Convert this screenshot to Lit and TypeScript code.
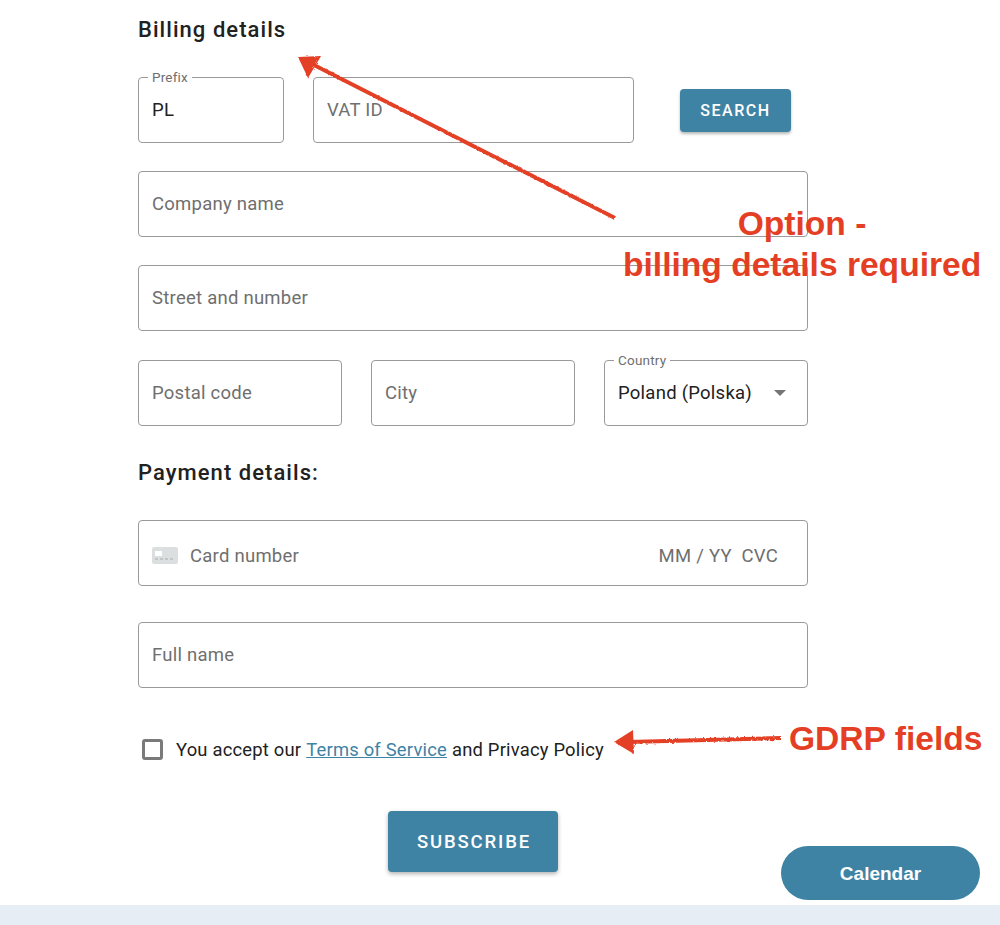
import { LitElement, html, css } from "lit";
import { customElement } from "lit/decorators.js";

@customElement("app-root")
export class AppRoot extends LitElement {
  static styles = css`
    :host { display: block; position: relative; width: 1000px; height: 925px; overflow: hidden; background: #fff; font-family: Roboto, "Liberation Sans", sans-serif; color: #212121; }
    .page { display: flex; flex-direction: column; height: 925px; }
    .form { flex: 1; display: flex; flex-direction: column; width: 670px; margin-left: 138px; }
    h2 { margin: 0; font-size: 22px; line-height: 28px; font-weight: 500; letter-spacing: 1.05px; color: #212121; }
    .title1 { margin-top: 16px; }
    .title2 { margin-top: 33px; }
    .row { display: flex; margin-top: 28px; gap: 29px; }
    .row.first { margin-top: 33px; align-items: center; }
    .row.r4 { margin-top: 29px; }
    .row.card { margin-top: 33px; }
    .row.card .field { padding-top: 5px; }
    .row.name { margin-top: 36px; }
    .field { position: relative; box-sizing: border-box; height: 66px; flex: 1 1 0; min-width: 0; border: 1px solid #9a9a9a; border-radius: 4px; display: flex; align-items: center; padding: 0 13px; font-size: 18.5px; letter-spacing: 0.25px; color: #212121; }
    .ph { color: #6f6f6f; }
    .legend { position: absolute; top: -9px; left: 9px; padding: 0 4px; background: #fff; font-size: 13.5px; line-height: 16px; letter-spacing: 0.2px; color: #6f6f6f; }
    .prefix { flex: 0 0 146px; }
    .vat { flex: 0 0 321px; }
    .search { box-sizing: border-box; flex: 0 0 111px; height: 43px; margin-left: 17px; border: 0; border-radius: 4px; background: #3f83a4; color: #fff; font: 500 16px Roboto, sans-serif; letter-spacing: 1.55px; box-shadow: 0 2px 3px rgba(0,0,0,.28); padding: 0; }
    .caret { margin-left: auto; margin-right: 8px; width: 0; height: 0; border-left: 6px solid transparent; border-right: 6px solid transparent; border-top: 6px solid #757575; }
    .cardicon { width: 26px; height: 17px; margin-right: 12px; flex: none; }
    .right { margin-left: auto; margin-right: 16px; letter-spacing: 0.25px; color: #6f6f6f; white-space: pre; }
    .consent { display: flex; align-items: center; margin-top: 50px; margin-left: 4px; height: 22px; font-size: 18.4px; letter-spacing: 0.2px; color: #212121; }
    .box { box-sizing: border-box; width: 21px; height: 21px; border: 3px solid #7a7a7a; border-radius: 3px; margin-right: 13px; flex: none; }
    a { color: #3f83a4; text-decoration: underline; margin: 0 5px; }
    .submit { box-sizing: border-box; align-self: flex-start; margin-left: 250px; margin-top: 51px; width: 170px; height: 61px; border: 0; border-radius: 4px; background: #3f83a4; color: #fff; font: 500 18.5px Roboto, sans-serif; letter-spacing: 1.85px; box-shadow: 0 2px 4px rgba(0,0,0,.3); padding: 0 0 0 2px; }
    .band { height: 20px; background: #e6edf5; flex: none; }
    .calendar { position: absolute; left: 781px; top: 846px; width: 199px; height: 54px; border: 0; padding: 1px 0 0; border-radius: 27px; background: #3f83a4; color: #fff; font: 700 19px "Liberation Sans", Arial, sans-serif; }
    .note { position: absolute; font-family: "Liberation Sans", Arial, sans-serif; font-weight: 700; color: #e43f25; white-space: nowrap; font-size: 33.6px; line-height: 41px; }
    .n1 { left: 623px; top: 203px; width: 358px; text-align: center; }
    .n1 span { display: block; }
    .n2 { left: 789px; top: 718px; }
    svg.ink { position: absolute; left: 0; top: 0; pointer-events: none; }
  `;

  render() {
    return html`
      <div class="page">
        <div class="form">
          <h2 class="title1">Billing details</h2>
          <div class="row first">
            <div class="field prefix"><span class="legend">Prefix</span>PL</div>
            <div class="field vat"><span class="ph">VAT ID</span></div>
            <button class="search">SEARCH</button>
          </div>
          <div class="row"><div class="field"><span class="ph">Company name</span></div></div>
          <div class="row"><div class="field"><span class="ph">Street and number</span></div></div>
          <div class="row r4">
            <div class="field"><span class="ph">Postal code</span></div>
            <div class="field"><span class="ph">City</span></div>
            <div class="field"><span class="legend">Country</span>Poland (Polska)<span class="caret"></span></div>
          </div>
          <h2 class="title2">Payment details:</h2>
          <div class="row card">
            <div class="field">
              <svg class="cardicon" viewBox="0 0 26 17"><rect width="26" height="17" rx="2" fill="#dcdfe0"/><rect x="3" y="4" width="7" height="5" fill="#fff"/><path d="M3 12h3M8 12h3M13 12h3M18 12h3" stroke="#a9acae" stroke-width="1"/></svg>
              <span class="ph">Card number</span><span class="right">MM / YY  CVC</span>
            </div>
          </div>
          <div class="row name"><div class="field"><span class="ph">Full name</span></div></div>
          <div class="consent"><span class="box"></span>You accept our<a>Terms of Service</a>and Privacy Policy</div>
          <button class="submit">SUBSCRIBE</button>
        </div>
        <div class="band"></div>
      </div>
      <button class="calendar">Calendar</button>
      <div class="note n1"><span>Option -</span><span>billing details required</span></div>
      <div class="note n2">GDRP fields</div>
      <svg class="ink" width="1000" height="925" viewBox="0 0 1000 925">
        <defs>
          <filter id="rough" x="-5%" y="-5%" width="110%" height="110%">
            <feTurbulence type="fractalNoise" baseFrequency="0.35" numOctaves="2" seed="4"/>
            <feDisplacementMap in="SourceGraphic" scale="3"/>
          </filter>
        </defs>
        <g filter="url(#rough)">
          <path d="M615 218L312 64" stroke="#e43f25" stroke-width="4" fill="none"/>
          <path d="M298 57L321 56L308 78Z" fill="#e43f25"/>
          <path d="M781 738L628 742" stroke="#e43f25" stroke-width="4" fill="none"/>
          <path d="M614 742L633 730L634 754Z" fill="#e43f25"/>
        </g>
      </svg>
    `;
  }
}
